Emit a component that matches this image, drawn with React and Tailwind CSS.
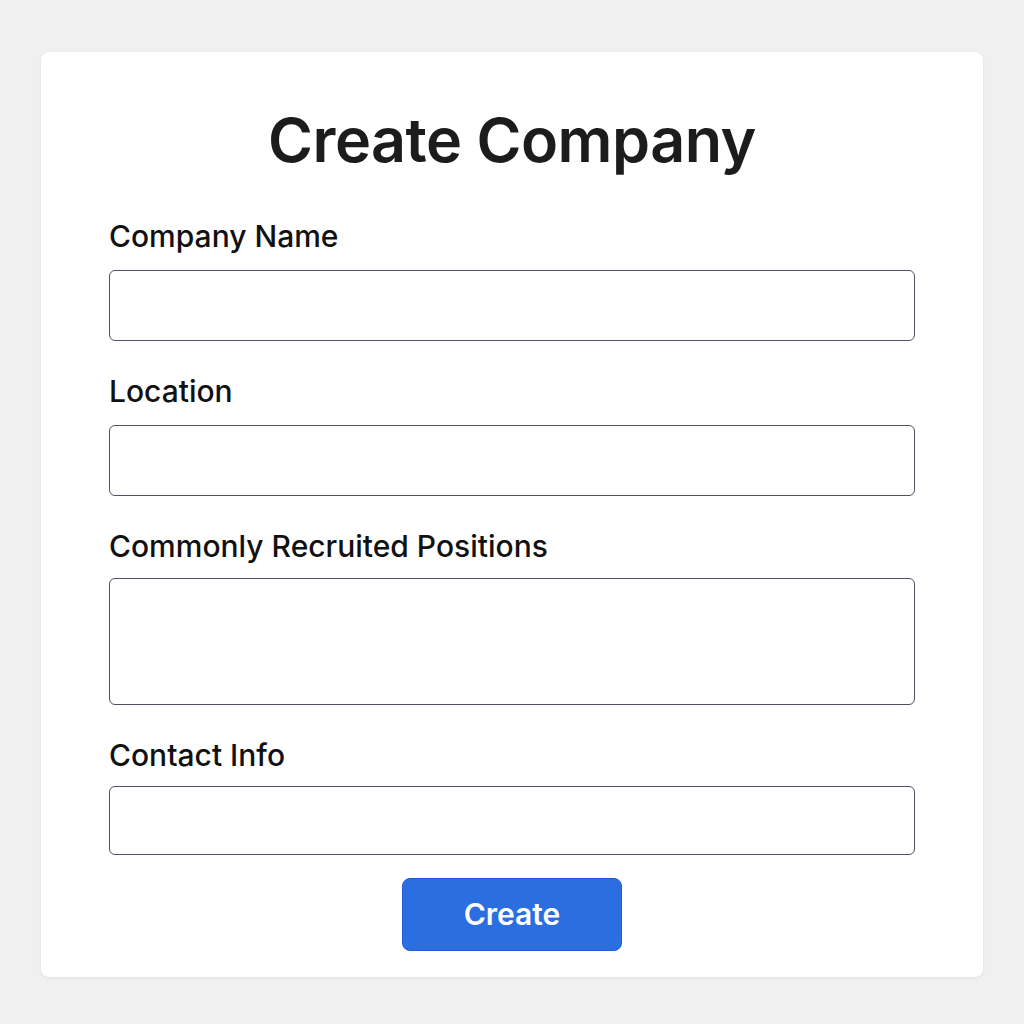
export default function App() {
  const font = { fontFamily: "Inter, 'Noto Sans', sans-serif" };
  const labelCls = "text-[30px] leading-[36px] font-medium text-[#111]";
  const inputCls = "w-full rounded-md border border-[#50535f] bg-white px-4 outline-none";
  return (
    <div className="min-h-[1024px] w-[1024px] bg-[#f0f0f0] pt-[52px] pl-[41px]" style={font}>
      <div className="w-[942px] h-[925px] bg-white rounded-lg shadow-[0_1px_3px_rgba(0,0,0,0.08)] px-[68px] pt-[58px] flex flex-col">
        <h1 className="text-[61px] leading-[61px] font-semibold text-[#1c1c1c] text-center tracking-[-0.5px]">
          Create Company
        </h1>
        <div className="mt-[47px] flex flex-col gap-[32px]">
          <div className="flex flex-col">
            <label className={labelCls + " mb-[16px]"}>Company Name</label>
            <input className={inputCls + " h-[71px]"} />
          </div>
          <div className="flex flex-col">
            <label className={labelCls + " mb-[16px]"}>Location</label>
            <input className={inputCls + " h-[71px]"} />
          </div>
          <div className="flex flex-col">
            <label className={labelCls + " mb-[14px]"}>Commonly Recruited Positions</label>
            <textarea className={inputCls + " h-[127px] py-2 resize-none"} />
          </div>
          <div className="flex flex-col">
            <label className={labelCls + " mb-[13px]"}>Contact Info</label>
            <input className={inputCls + " h-[69px]"} />
          </div>
        </div>
        <div className="mt-[23px] flex justify-center">
          <button className="w-[220px] h-[73px] rounded-lg bg-[#2a6ee0] border border-[#1a5fd8] text-white text-[30px] font-semibold">
            Create
          </button>
        </div>
      </div>
    </div>
  );
}
